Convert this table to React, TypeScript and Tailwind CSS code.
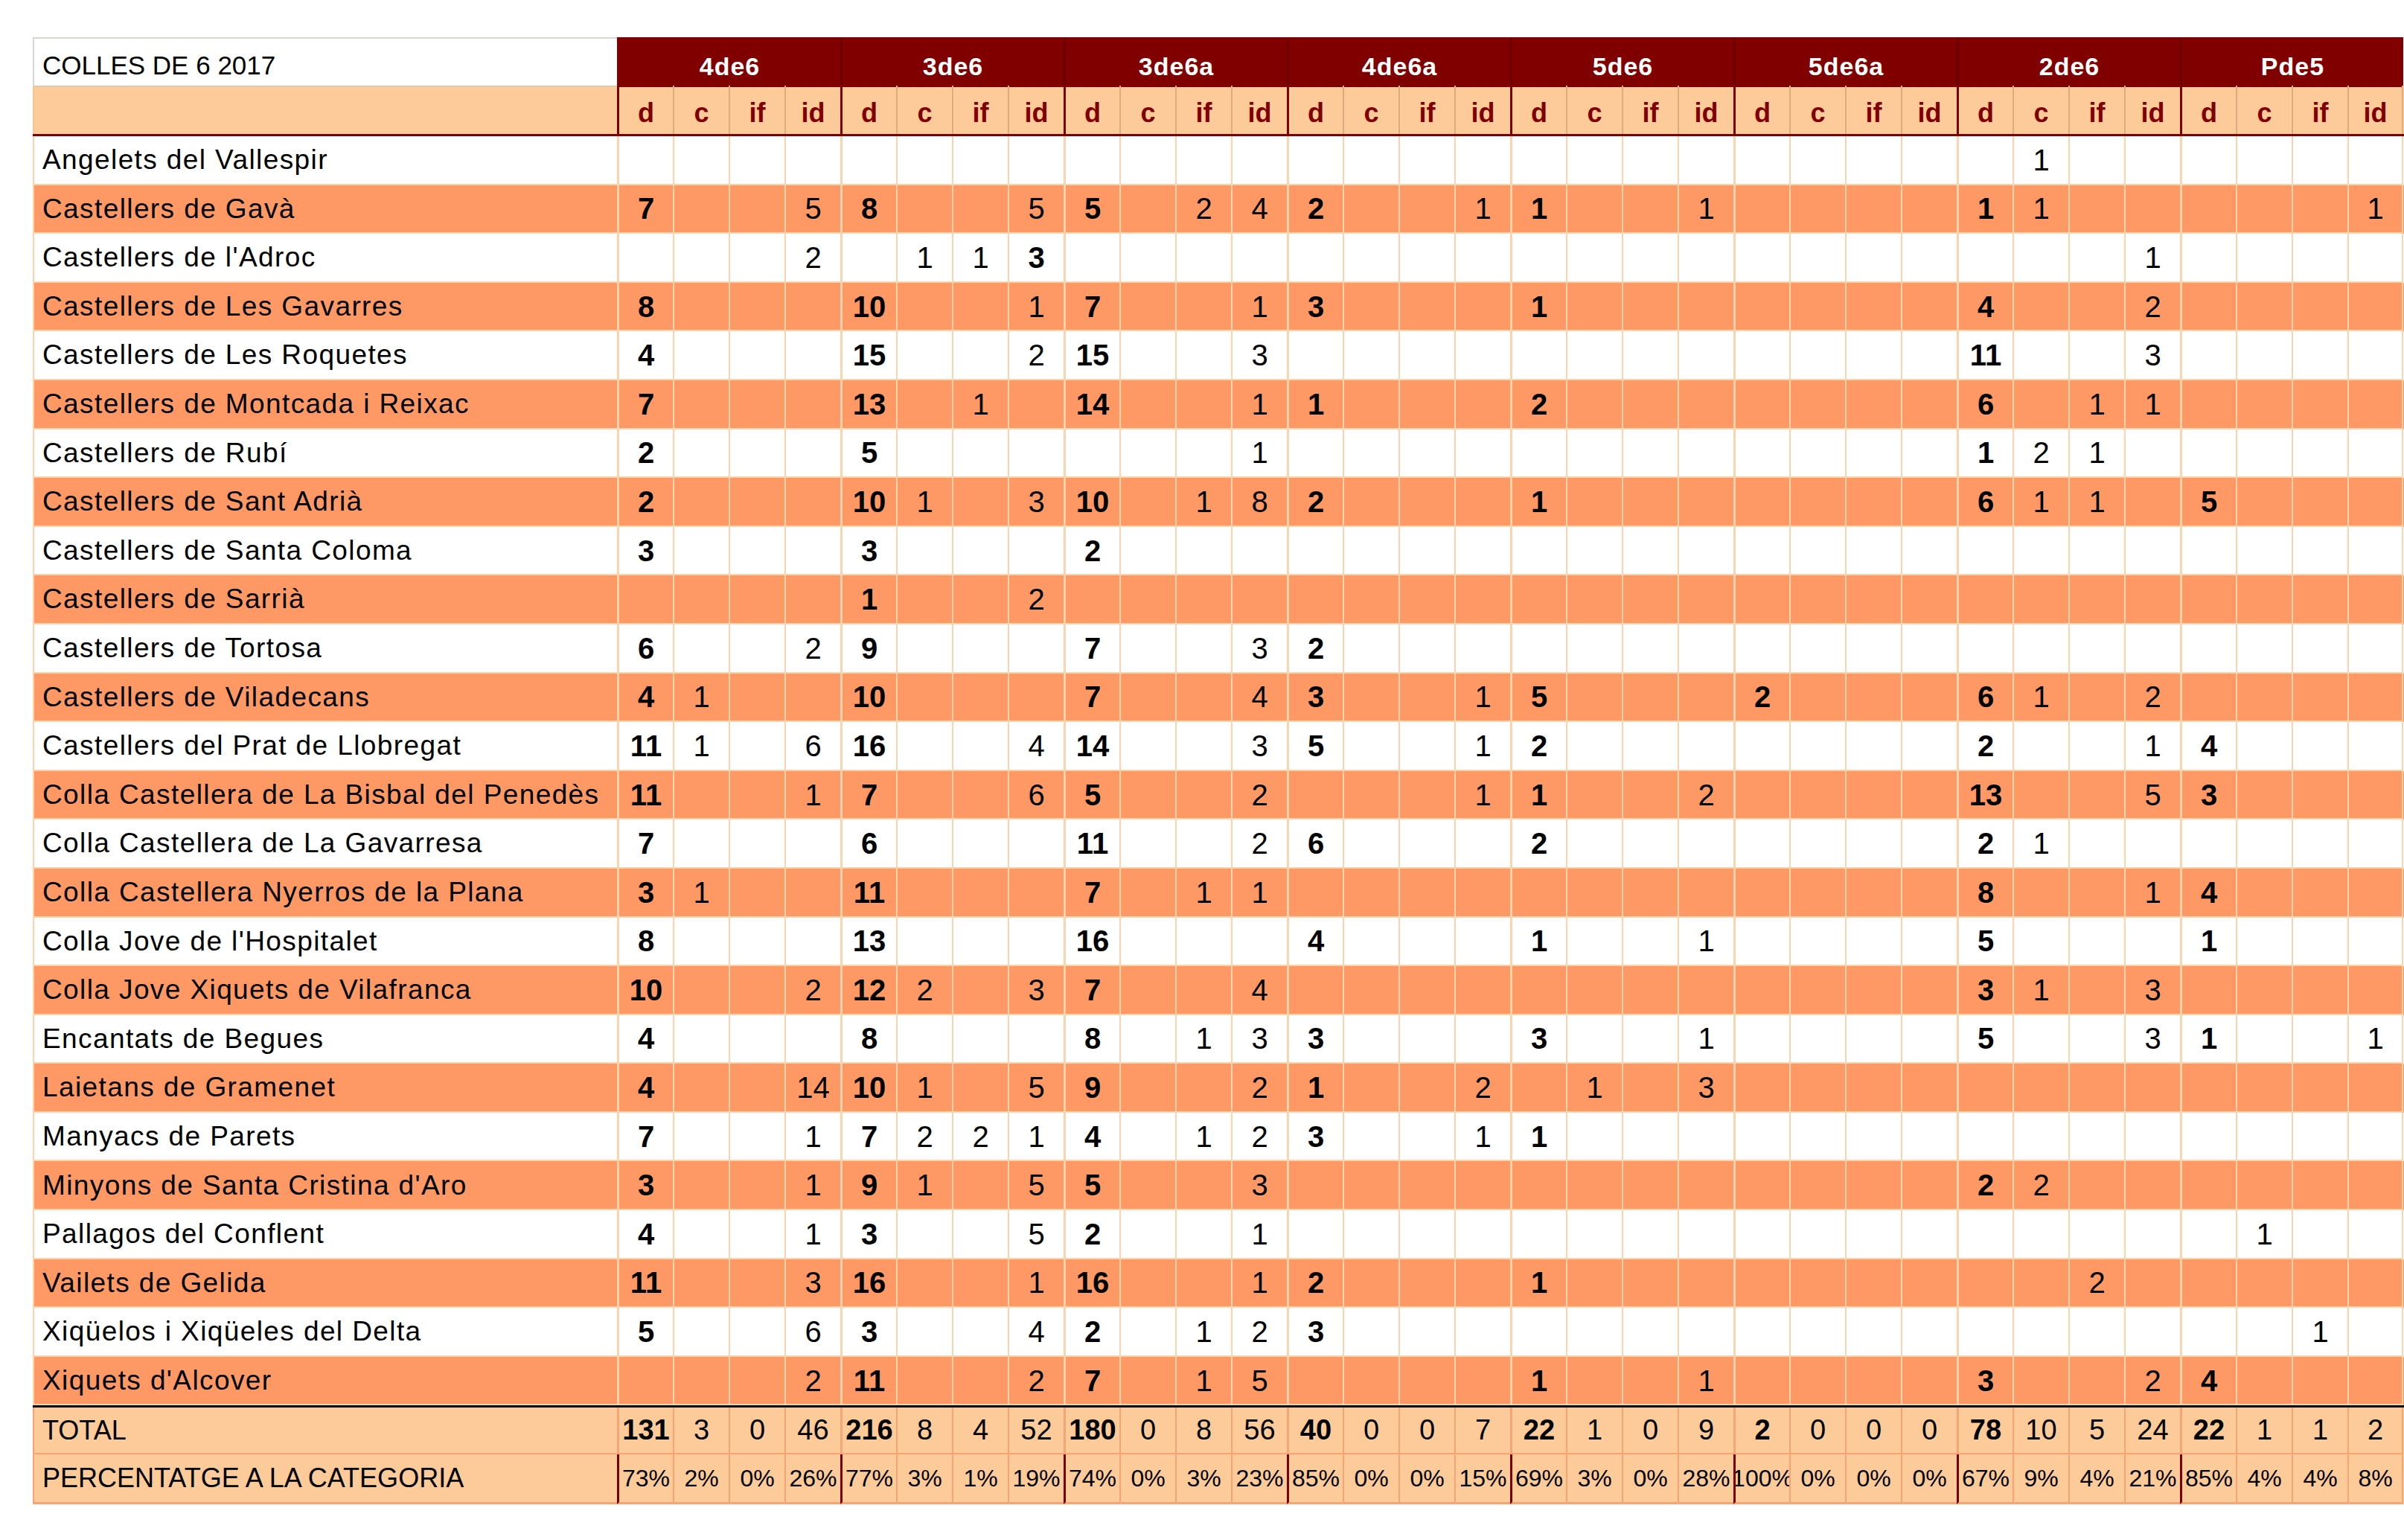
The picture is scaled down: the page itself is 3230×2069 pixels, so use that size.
import React from "react";

const GROUPS = ["4de6", "3de6", "3de6a", "4de6a", "5de6", "5de6a", "2de6", "Pde5"];
const SUBS = ["d", "c", "if", "id"];

const ROWS: [string, string][] = [
  ["Angelets del Vallespir", ",,,|,,,|,,,|,,,|,,,|,,,|,1,,|,,,"],
  ["Castellers de Gavà", "7,,,5|8,,,5|5,,2,4|2,,,1|1,,,1|,,,|1,1,,|,,,1"],
  ["Castellers de l'Adroc", ",,,2|,1,1,*3|,,,|,,,|,,,|,,,|,,,1|,,,"],
  ["Castellers de Les Gavarres", "8,,,|10,,,1|7,,,1|3,,,|1,,,|,,,|4,,,2|,,,"],
  ["Castellers de Les Roquetes", "4,,,|15,,,2|15,,,3|,,,|,,,|,,,|11,,,3|,,,"],
  ["Castellers de Montcada i Reixac", "7,,,|13,,1,|14,,,1|1,,,|2,,,|,,,|6,,1,1|,,,"],
  ["Castellers de Rubí", "2,,,|5,,,|,,,1|,,,|,,,|,,,|1,2,1,|,,,"],
  ["Castellers de Sant Adrià", "2,,,|10,1,,3|10,,1,8|2,,,|1,,,|,,,|6,1,1,|5,,,"],
  ["Castellers de Santa Coloma", "3,,,|3,,,|2,,,|,,,|,,,|,,,|,,,|,,,"],
  ["Castellers de Sarrià", ",,,|1,,,2|,,,|,,,|,,,|,,,|,,,|,,,"],
  ["Castellers de Tortosa", "6,,,2|9,,,|7,,,3|2,,,|,,,|,,,|,,,|,,,"],
  ["Castellers de Viladecans", "4,1,,|10,,,|7,,,4|3,,,1|5,,,|2,,,|6,1,,2|,,,"],
  ["Castellers del Prat de Llobregat", "11,1,,6|16,,,4|14,,,3|5,,,1|2,,,|,,,|2,,,1|4,,,"],
  ["Colla Castellera de La Bisbal del Penedès", "11,,,1|7,,,6|5,,,2|,,,1|1,,,2|,,,|13,,,5|3,,,"],
  ["Colla Castellera de La Gavarresa", "7,,,|6,,,|11,,,2|6,,,|2,,,|,,,|2,1,,|,,,"],
  ["Colla Castellera Nyerros de la Plana", "3,1,,|11,,,|7,,1,1|,,,|,,,|,,,|8,,,1|4,,,"],
  ["Colla Jove de l'Hospitalet", "8,,,|13,,,|16,,,|4,,,|1,,,1|,,,|5,,,|1,,,"],
  ["Colla Jove Xiquets de Vilafranca", "10,,,2|12,2,,3|7,,,4|,,,|,,,|,,,|3,1,,3|,,,"],
  ["Encantats de Begues", "4,,,|8,,,|8,,1,3|3,,,|3,,,1|,,,|5,,,3|1,,,1"],
  ["Laietans de Gramenet", "4,,,14|10,1,,5|9,,,2|1,,,2|,1,,3|,,,|,,,|,,,"],
  ["Manyacs de Parets", "7,,,1|7,2,2,1|4,,1,2|3,,,1|1,,,|,,,|,,,|,,,"],
  ["Minyons de Santa Cristina d'Aro", "3,,,1|9,1,,5|5,,,3|,,,|,,,|,,,|2,2,,|,,,"],
  ["Pallagos del Conflent", "4,,,1|3,,,5|2,,,1|,,,|,,,|,,,|,,,|,1,,"],
  ["Vailets de Gelida", "11,,,3|16,,,1|16,,,1|2,,,|1,,,|,,,|,,2,|,,,"],
  ["Xiqüelos i Xiqüeles del Delta", "5,,,6|3,,,4|2,,1,2|3,,,|,,,|,,,|,,,|,,1,"],
  ["Xiquets d'Alcover", ",,,2|11,,,2|7,,1,5|,,,|1,,,1|,,,|3,,,2|4,,,"],
];

const TOTALS = "131,3,0,46|216,8,4,52|180,0,8,56|40,0,0,7|22,1,0,9|2,0,0,0|78,10,5,24|22,1,1,2";
const PERCENTS =
  "73%,2%,0%,26%|77%,3%,1%,19%|74%,0%,3%,23%|85%,0%,0%,15%|69%,3%,0%,28%|100%,0%,0%,0%|67%,9%,4%,21%|85%,4%,4%,8%";

function parse(s: string): string[] {
  return s.split("|").flatMap((g) => g.split(","));
}

const GRID = "grid grid-cols-[785px_repeat(32,75px)]";

function DataCell({ value, index, lineColor }: { value: string; index: number; lineColor: string }) {
  const isD = index % 4 === 0;
  const isLast = index === 31;
  let bold = isD;
  let v = value;
  if (v.startsWith("*")) {
    bold = true;
    v = v.slice(1);
  }
  return (
    <div
      className={`flex items-center justify-center overflow-hidden whitespace-nowrap ${
        isD ? "border-l-[3px] border-l-[#7d0000]" : "border-l-2"
      } ${isLast ? "border-r-2" : ""} ${lineColor} ${bold ? "font-bold" : ""}`}
    >
      {v}
    </div>
  );
}

export default function App() {
  return (
    <div className="w-[3230px] h-[2069px] bg-white pt-[50px] pl-[44px] font-['Liberation_Sans',Arial,sans-serif] text-black overflow-hidden">
      <div className="w-[3186px]">
        {/* Group header row */}
        <div className={`${GRID} h-[65px]`}>
          <div className="flex items-center border-t-2 border-l-2 border-b-2 border-[#d9d6d2] border-b-[#e3c7a6] bg-white pl-[11px] pt-[10px] text-[35px]">
            COLLES DE 6 2017
          </div>
          {GROUPS.map((g, i) => (
            <div
              key={g}
              className={`col-span-4 flex items-center justify-center bg-[#800000] pt-[12px] text-white font-bold text-[34px] tracking-[1px] ${
                i === 0 ? "border-l-[3px] border-l-[#800000]" : "border-l-[3px] border-l-[#6c0000]"
              }`}
            >
              {g}
            </div>
          ))}
        </div>

        {/* Sub header row */}
        <div className={`${GRID} h-[68px] border-b-[3px] border-b-[#800000] bg-[#fdca9a]`}>
          <div className="border-l-2 border-l-[#f3c69c]" />
          {GROUPS.flatMap((g) =>
            SUBS.map((s, j) => (
              <div
                key={g + s}
                className={`flex items-center justify-center pt-[8px] text-[36px] font-bold text-[#800000] ${
                  j === 0 ? "border-l-[3px] border-l-[#800000]" : "border-l-2 border-l-[#dcab7f]"
                } ${g === "Pde5" && j === 3 ? "border-r-2 border-r-[#dcab7f]" : ""}`}
              >
                {s}
              </div>
            ))
          )}
        </div>

        {/* Data rows */}
        {ROWS.map(([name, data], r) => {
          const vals = parse(data);
          const orange = r % 2 === 1;
          return (
            <div key={name} className={`${GRID} h-[65.6px] ${orange ? "bg-[#fe9966]" : "bg-white"}`}>
              <div className="flex items-center overflow-hidden whitespace-nowrap border-l-2 border-b-2 border-[#fcd3ab] pl-[11px] text-[37px] tracking-[1.4px]">
                {name}
              </div>
              {vals.map((v, i) => (
                <DataCell
                  key={i}
                  value={v}
                  index={i}
                  lineColor="border-b-2 border-b-[#fcd3ab] border-l-[#fcd3ab] border-r-[#fcd3ab] text-[40px]"
                />
              ))}
            </div>
          );
        })}

        {/* Total row */}
        <div className={`${GRID} h-[66px] border-t-[3px] border-t-black bg-[#fdca9a]`}>
          <div className="flex items-center border-l-2 border-b-2 border-[#f7a373] pl-[11px] text-[36px]">TOTAL</div>
          {parse(TOTALS).map((v, i) => (
            <DataCell
              key={i}
              value={v}
              index={i}
              lineColor="border-b-2 border-b-[#f7a373] border-l-[#f7a373] border-r-[#f7a373] text-[38px]"
            />
          ))}
        </div>

        {/* Percent row */}
        <div className={`${GRID} h-[67px] bg-[#fdca9a]`}>
          <div className="flex items-center border-l-2 border-b-[3px] border-[#f7a373] pl-[11px] text-[36px]">
            PERCENTATGE A LA CATEGORIA
          </div>
          {parse(PERCENTS).map((v, i) => {
            const isD = i % 4 === 0;
            return (
              <div
                key={i}
                className={`flex items-center justify-center overflow-hidden whitespace-nowrap border-b-[3px] border-b-[#f7a373] text-[32px] ${
                  isD ? "border-l-[3px] border-l-[#7d0000]" : "border-l-2 border-l-[#f7a373]"
                } ${i === 31 ? "border-r-2 border-r-[#f7a373]" : ""}`}
              >
                {v}
              </div>
            );
          })}
        </div>
      </div>
    </div>
  );
}
